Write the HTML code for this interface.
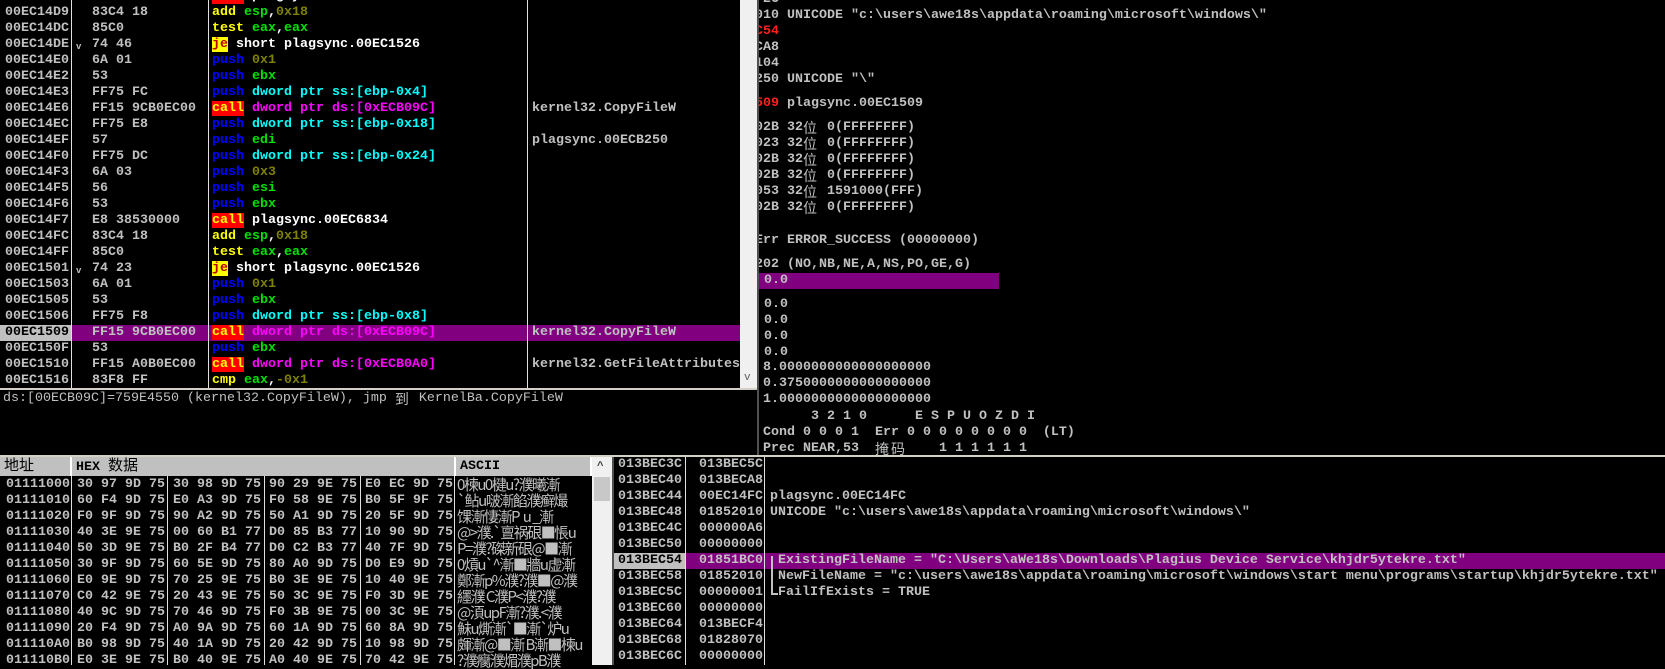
<!DOCTYPE html>
<html><head><meta charset="utf-8"><style>
*{margin:0;padding:0;box-sizing:border-box}
body{width:1665px;height:665px;background:#000;overflow:hidden;position:relative;font-family:"Liberation Mono","Noto Sans CJK SC",monospace;font-size:13.33px;font-weight:bold;color:#c0c0c0}
.a{position:absolute;white-space:pre;line-height:16px;height:16px}
.vl{position:absolute;background:#e0e0e0;width:1px}
.y{color:#ffff00}.g{color:#00e000}.o{color:#808000}.b{color:#0000ff}.c{color:#00ffff}.m{color:#ff00ff}.w{color:#fff}.r{color:#ff2020}
.call{background:#ff0000;color:#ffff00}
.je{background:#ffff00;color:#c00000}
.cj{display:inline-block;width:16px;font-family:"Noto Sans CJK SC",sans-serif;font-weight:normal;font-size:14px;line-height:16px;vertical-align:top}
.hdr{position:absolute;top:457px;height:19px;background:#c0c0c0;color:#000;border-right:2px solid #fff;line-height:19px;padding-left:4px;font-family:"Liberation Mono","Noto Sans CJK SC",monospace}
.asc{font-family:"Noto Sans CJK SC",sans-serif;font-weight:normal;font-size:15px;letter-spacing:-1.5px;overflow:hidden;width:134px}
</style></head><body>

<!-- disassembly -->
<div style="position:absolute;left:0;top:0;width:740px;height:388px;overflow:hidden">
<div class="a" style="top:325px;left:0;width:740px;background:#800080"></div>
<div class="a" style="top:325px;left:0;width:71px;background:#c0c0c0"></div>
<div class="vl" style="left:71px;top:0;height:388px"></div>
<div class="vl" style="left:208px;top:0;height:388px"></div>
<div class="vl" style="left:527px;top:0;height:388px"></div>

<div class="a" style="top:-11px;left:5px">00EC14D4</div><div class="a" style="top:-11px;left:92px">E8 56530000</div><div class="a" style="top:-11px;left:212px"><span class="call">call</span> <span class="w">plagsync.00EC6834</span></div>
<div class="a" style="top:5px;left:5px">00EC14D9</div><div class="a" style="top:5px;left:92px">83C4 18</div><div class="a" style="top:5px;left:212px"><span class="y">add</span> <span class="g">esp</span><span class="w">,</span><span class="o">0x18</span></div>
<div class="a" style="top:21px;left:5px">00EC14DC</div><div class="a" style="top:21px;left:92px">85C0</div><div class="a" style="top:21px;left:212px"><span class="y">test</span> <span class="g">eax</span><span class="w">,</span><span class="g">eax</span></div>
<div class="a" style="top:37px;left:5px">00EC14DE</div><div class="a" style="top:39px;left:76px;font-size:9px">v</div><div class="a" style="top:37px;left:92px">74 46</div><div class="a" style="top:37px;left:212px"><span class="je">je</span> <span class="w">short plagsync.00EC1526</span></div>
<div class="a" style="top:53px;left:5px">00EC14E0</div><div class="a" style="top:53px;left:92px">6A 01</div><div class="a" style="top:53px;left:212px"><span class="b">push</span> <span class="o">0x1</span></div>
<div class="a" style="top:69px;left:5px">00EC14E2</div><div class="a" style="top:69px;left:92px">53</div><div class="a" style="top:69px;left:212px"><span class="b">push</span> <span class="g">ebx</span></div>
<div class="a" style="top:85px;left:5px">00EC14E3</div><div class="a" style="top:85px;left:92px">FF75 FC</div><div class="a" style="top:85px;left:212px"><span class="b">push</span> <span class="c">dword ptr ss:[ebp-0x4]</span></div>
<div class="a" style="top:101px;left:5px">00EC14E6</div><div class="a" style="top:101px;left:92px">FF15 9CB0EC00</div><div class="a" style="top:101px;left:212px"><span class="call">call</span> <span class="m">dword ptr ds:[0xECB09C]</span></div><div class="a" style="top:101px;left:532px">kernel32.CopyFileW</div>
<div class="a" style="top:117px;left:5px">00EC14EC</div><div class="a" style="top:117px;left:92px">FF75 E8</div><div class="a" style="top:117px;left:212px"><span class="b">push</span> <span class="c">dword ptr ss:[ebp-0x18]</span></div>
<div class="a" style="top:133px;left:5px">00EC14EF</div><div class="a" style="top:133px;left:92px">57</div><div class="a" style="top:133px;left:212px"><span class="b">push</span> <span class="g">edi</span></div><div class="a" style="top:133px;left:532px">plagsync.00ECB250</div>
<div class="a" style="top:149px;left:5px">00EC14F0</div><div class="a" style="top:149px;left:92px">FF75 DC</div><div class="a" style="top:149px;left:212px"><span class="b">push</span> <span class="c">dword ptr ss:[ebp-0x24]</span></div>
<div class="a" style="top:165px;left:5px">00EC14F3</div><div class="a" style="top:165px;left:92px">6A 03</div><div class="a" style="top:165px;left:212px"><span class="b">push</span> <span class="o">0x3</span></div>
<div class="a" style="top:181px;left:5px">00EC14F5</div><div class="a" style="top:181px;left:92px">56</div><div class="a" style="top:181px;left:212px"><span class="b">push</span> <span class="g">esi</span></div>
<div class="a" style="top:197px;left:5px">00EC14F6</div><div class="a" style="top:197px;left:92px">53</div><div class="a" style="top:197px;left:212px"><span class="b">push</span> <span class="g">ebx</span></div>
<div class="a" style="top:213px;left:5px">00EC14F7</div><div class="a" style="top:213px;left:92px">E8 38530000</div><div class="a" style="top:213px;left:212px"><span class="call">call</span> <span class="w">plagsync.00EC6834</span></div>
<div class="a" style="top:229px;left:5px">00EC14FC</div><div class="a" style="top:229px;left:92px">83C4 18</div><div class="a" style="top:229px;left:212px"><span class="y">add</span> <span class="g">esp</span><span class="w">,</span><span class="o">0x18</span></div>
<div class="a" style="top:245px;left:5px">00EC14FF</div><div class="a" style="top:245px;left:92px">85C0</div><div class="a" style="top:245px;left:212px"><span class="y">test</span> <span class="g">eax</span><span class="w">,</span><span class="g">eax</span></div>
<div class="a" style="top:261px;left:5px">00EC1501</div><div class="a" style="top:263px;left:76px;font-size:9px">v</div><div class="a" style="top:261px;left:92px">74 23</div><div class="a" style="top:261px;left:212px"><span class="je">je</span> <span class="w">short plagsync.00EC1526</span></div>
<div class="a" style="top:277px;left:5px">00EC1503</div><div class="a" style="top:277px;left:92px">6A 01</div><div class="a" style="top:277px;left:212px"><span class="b">push</span> <span class="o">0x1</span></div>
<div class="a" style="top:293px;left:5px">00EC1505</div><div class="a" style="top:293px;left:92px">53</div><div class="a" style="top:293px;left:212px"><span class="b">push</span> <span class="g">ebx</span></div>
<div class="a" style="top:309px;left:5px">00EC1506</div><div class="a" style="top:309px;left:92px">FF75 F8</div><div class="a" style="top:309px;left:212px"><span class="b">push</span> <span class="c">dword ptr ss:[ebp-0x8]</span></div>
<div class="a" style="top:325px;left:5px;color:#000">00EC1509</div><div class="a" style="top:325px;left:92px">FF15 9CB0EC00</div><div class="a" style="top:325px;left:212px"><span class="call">call</span> <span class="m">dword ptr ds:[0xECB09C]</span></div><div class="a" style="top:325px;left:532px">kernel32.CopyFileW</div>
<div class="a" style="top:341px;left:5px">00EC150F</div><div class="a" style="top:341px;left:92px">53</div><div class="a" style="top:341px;left:212px"><span class="b">push</span> <span class="g">ebx</span></div>
<div class="a" style="top:357px;left:5px">00EC1510</div><div class="a" style="top:357px;left:92px">FF15 A0B0EC00</div><div class="a" style="top:357px;left:212px"><span class="call">call</span> <span class="m">dword ptr ds:[0xECB0A0]</span></div><div class="a" style="top:357px;left:532px">kernel32.GetFileAttributesW</div>
<div class="a" style="top:373px;left:5px">00EC1516</div><div class="a" style="top:373px;left:92px">83F8 FF</div><div class="a" style="top:373px;left:212px"><span class="y">cmp</span> <span class="g">eax</span><span class="w">,</span><span class="o">-0x1</span></div>
</div>
<!-- disasm scrollbar -->
<div style="position:absolute;left:740px;top:0;width:17px;height:388px;background:#f0f0f0"></div>
<div class="a" style="left:744px;top:370px;color:#606060;font-weight:normal;font-size:11px">v</div>
<div style="position:absolute;left:757px;top:0;width:2px;height:457px;background:#505050"></div>

<!-- info pane -->
<div style="position:absolute;left:0;top:388px;width:757px;height:2px;background:#d4d0c8"></div>
<div class="a" style="left:3px;top:391px;font-weight:normal">ds:[00ECB09C]=759E4550 (kernel32.CopyFileW), jmp <span class="cj">到</span> KernelBa.CopyFileW</div>

<!-- registers -->
<div style="position:absolute;left:759px;top:0;width:906px;height:455px;overflow:hidden">
<div class="a" style="left:0;top:273px;width:240px;background:#800080"></div>
<div class="a" style="left:-4px;top:-8px">F2C</div>
<div class="a" style="left:-4px;top:8px">010 UNICODE "c:\users\awe18s\appdata\roaming\microsoft\windows\"</div>
<div class="a r" style="left:-4px;top:24px">C54</div>
<div class="a" style="left:-4px;top:40px">CA8</div>
<div class="a" style="left:-4px;top:56px">104</div>
<div class="a" style="left:-4px;top:72px">250 UNICODE "\"</div>
<div class="a" style="left:-4px;top:96px"><span class="r">509</span> plagsync.00EC1509</div>
<div class="a" style="left:-4px;top:120px">02B 32<span class="cj">位</span> 0(FFFFFFFF)</div>
<div class="a" style="left:-4px;top:136px">023 32<span class="cj">位</span> 0(FFFFFFFF)</div>
<div class="a" style="left:-4px;top:152px">02B 32<span class="cj">位</span> 0(FFFFFFFF)</div>
<div class="a" style="left:-4px;top:168px">02B 32<span class="cj">位</span> 0(FFFFFFFF)</div>
<div class="a" style="left:-4px;top:184px">053 32<span class="cj">位</span> 1591000(FFF)</div>
<div class="a" style="left:-4px;top:200px">02B 32<span class="cj">位</span> 0(FFFFFFFF)</div>
<div class="a" style="left:-4px;top:233px">Err ERROR_SUCCESS (00000000)</div>
<div class="a" style="left:-4px;top:257px">202 (NO,NB,NE,A,NS,PO,GE,G)</div>
<div class="a" style="left:5px;top:273px">0.0</div>
<div class="a" style="left:5px;top:297px">0.0</div>
<div class="a" style="left:5px;top:313px">0.0</div>
<div class="a" style="left:5px;top:329px">0.0</div>
<div class="a" style="left:5px;top:345px">0.0</div>
<div class="a" style="left:4px;top:360px">8.0000000000000000000</div>
<div class="a" style="left:4px;top:376px">0.3750000000000000000</div>
<div class="a" style="left:4px;top:392px">1.0000000000000000000</div>
<div class="a" style="left:4px;top:409px">      3 2 1 0      E S P U O Z D I</div>
<div class="a" style="left:4px;top:425px">Cond 0 0 0 1  Err 0 0 0 0 0 0 0 0  (LT)</div>
<div class="a" style="left:4px;top:441px">Prec NEAR,53  <span class="cj">掩</span><span class="cj">码</span>    1 1 1 1 1 1</div>
</div>

<div style="position:absolute;left:0;top:455px;width:1665px;height:2px;background:#d4d0c8"></div>

<!-- hex dump -->
<div class="hdr" style="left:0;width:72px;font-weight:normal;font-size:15px">地址</div>
<div class="hdr" style="left:72px;width:384px">HEX <span style="font-weight:normal;font-size:15px">数据</span></div>
<div class="hdr" style="left:456px;width:136px">ASCII</div>
<div class="vl" style="left:71px;top:476px;height:189px"></div>
<div class="vl" style="left:167px;top:476px;height:189px"></div>
<div class="vl" style="left:264px;top:476px;height:189px"></div>
<div class="vl" style="left:360px;top:476px;height:189px"></div>
<div class="vl" style="left:454px;top:476px;height:189px"></div>
<div style="position:absolute;left:592px;top:457px;width:20px;height:208px;background:#f0f0f0"></div>
<div style="position:absolute;left:594px;top:477px;width:16px;height:24px;background:#c8c8c8"></div>
<div class="a" style="left:597px;top:459px;color:#404040;font-size:11px">^</div>
<div style="position:absolute;left:612px;top:457px;width:2px;height:208px;background:#505050"></div>

<div class="a" style="left:6px;top:477px">01111000</div><div class="a" style="left:77px;top:477px">30 97 9D 75</div><div class="a" style="left:173px;top:477px">30 98 9D 75</div><div class="a" style="left:269px;top:477px">90 29 9E 75</div><div class="a" style="left:365px;top:477px">E0 EC 9D 75</div><div class="a asc" style="left:457px;top:477px">0楝u0楗u?濮曦漸</div>
<div class="a" style="left:6px;top:493px">01111010</div><div class="a" style="left:77px;top:493px">60 F4 9D 75</div><div class="a" style="left:173px;top:493px">E0 A3 9D 75</div><div class="a" style="left:269px;top:493px">F0 58 9E 75</div><div class="a" style="left:365px;top:493px">B0 5F 9F 75</div><div class="a asc" style="left:457px;top:493px">`鲇u啵漸餡濮癣熶</div>
<div class="a" style="left:6px;top:509px">01111020</div><div class="a" style="left:77px;top:509px">F0 9F 9D 75</div><div class="a" style="left:173px;top:509px">90 A2 9D 75</div><div class="a" style="left:269px;top:509px">50 A1 9D 75</div><div class="a" style="left:365px;top:509px">20 5F 9D 75</div><div class="a asc" style="left:457px;top:509px">馃漸悽漸P  u _漸</div>
<div class="a" style="left:6px;top:525px">01111030</div><div class="a" style="left:77px;top:525px">40 3E 9E 75</div><div class="a" style="left:173px;top:525px">00 60 B1 77</div><div class="a" style="left:269px;top:525px">D0 85 B3 77</div><div class="a" style="left:365px;top:525px">10 90 9D 75</div><div class="a asc" style="left:457px;top:525px">@&gt;濮.`亶祸硍■悵u</div>
<div class="a" style="left:6px;top:541px">01111040</div><div class="a" style="left:77px;top:541px">50 3D 9E 75</div><div class="a" style="left:173px;top:541px">B0 2F B4 77</div><div class="a" style="left:269px;top:541px">D0 C2 B3 77</div><div class="a" style="left:365px;top:541px">40 7F 9D 75</div><div class="a asc" style="left:457px;top:541px">P=濮?磔新硍@■漸</div>
<div class="a" style="left:6px;top:557px">01111050</div><div class="a" style="left:77px;top:557px">30 9F 9D 75</div><div class="a" style="left:173px;top:557px">60 5E 9D 75</div><div class="a" style="left:269px;top:557px">80 A0 9D 75</div><div class="a" style="left:365px;top:557px">D0 E9 9D 75</div><div class="a asc" style="left:457px;top:557px">0熕u`^漸■牆u虚漸</div>
<div class="a" style="left:6px;top:573px">01111060</div><div class="a" style="left:77px;top:573px">E0 9E 9D 75</div><div class="a" style="left:173px;top:573px">70 25 9E 75</div><div class="a" style="left:269px;top:573px">B0 3E 9E 75</div><div class="a" style="left:365px;top:573px">10 40 9E 75</div><div class="a asc" style="left:457px;top:573px">鄭漸p%濮?濮■@濮</div>
<div class="a" style="left:6px;top:589px">01111070</div><div class="a" style="left:77px;top:589px">C0 42 9E 75</div><div class="a" style="left:173px;top:589px">20 43 9E 75</div><div class="a" style="left:269px;top:589px">50 3C 9E 75</div><div class="a" style="left:365px;top:589px">F0 3D 9E 75</div><div class="a asc" style="left:457px;top:589px">纆濮 C濮P&lt;濮?濮</div>
<div class="a" style="left:6px;top:605px">01111080</div><div class="a" style="left:77px;top:605px">40 9C 9D 75</div><div class="a" style="left:173px;top:605px">70 46 9D 75</div><div class="a" style="left:269px;top:605px">F0 3B 9E 75</div><div class="a" style="left:365px;top:605px">00 3C 9E 75</div><div class="a asc" style="left:457px;top:605px">@湏upF漸?濮.&lt;濮</div>
<div class="a" style="left:6px;top:621px">01111090</div><div class="a" style="left:77px;top:621px">20 F4 9D 75</div><div class="a" style="left:173px;top:621px">A0 9A 9D 75</div><div class="a" style="left:269px;top:621px">60 1A 9D 75</div><div class="a" style="left:365px;top:621px">60 8A 9D 75</div><div class="a asc" style="left:457px;top:621px">鮇u燍漸`■漸`炉u</div>
<div class="a" style="left:6px;top:637px">011110A0</div><div class="a" style="left:77px;top:637px">B0 98 9D 75</div><div class="a" style="left:173px;top:637px">40 1A 9D 75</div><div class="a" style="left:269px;top:637px">20 42 9D 75</div><div class="a" style="left:365px;top:637px">10 98 9D 75</div><div class="a asc" style="left:457px;top:637px">皹漸@■漸 B漸■楝u</div>
<div class="a" style="left:6px;top:653px">011110B0</div><div class="a" style="left:77px;top:653px">E0 3E 9E 75</div><div class="a" style="left:173px;top:653px">B0 40 9E 75</div><div class="a" style="left:269px;top:653px">A0 40 9E 75</div><div class="a" style="left:365px;top:653px">70 42 9E 75</div><div class="a asc" style="left:457px;top:653px">?濮癵濮煝濮pB濮</div>

<!-- stack -->
<div class="a" style="left:614px;top:553px;width:72px;background:#c0c0c0"></div>
<div class="a" style="left:686px;top:553px;width:979px;background:#800080"></div>
<div class="vl" style="left:685px;top:457px;height:208px"></div>
<div class="vl" style="left:764px;top:457px;height:208px"></div>
<div class="a" style="left:618px;top:457px">013BEC3C</div><div class="a" style="left:699px;top:457px">013BEC5C</div>
<div class="a" style="left:618px;top:473px">013BEC40</div><div class="a" style="left:699px;top:473px">013BECA8</div>
<div class="a" style="left:618px;top:489px">013BEC44</div><div class="a" style="left:699px;top:489px">00EC14FC</div><div class="a" style="left:770px;top:489px">plagsync.00EC14FC</div>
<div class="a" style="left:618px;top:505px">013BEC48</div><div class="a" style="left:699px;top:505px">01852010</div><div class="a" style="left:770px;top:505px">UNICODE "c:\users\awe18s\appdata\roaming\microsoft\windows\"</div>
<div class="a" style="left:618px;top:521px">013BEC4C</div><div class="a" style="left:699px;top:521px">000000A6</div>
<div class="a" style="left:618px;top:537px">013BEC50</div><div class="a" style="left:699px;top:537px">00000000</div>
<div class="a" style="left:618px;top:553px;color:#000">013BEC54</div><div class="a" style="left:699px;top:553px">01851BC0</div><div class="a" style="left:778px;top:553px">ExistingFileName = "C:\Users\aWe18s\Downloads\Plagius Device Service\khjdr5ytekre.txt"</div>
<div class="a" style="left:618px;top:569px">013BEC58</div><div class="a" style="left:699px;top:569px">01852010</div><div class="a" style="left:778px;top:569px">NewFileName = "c:\users\awe18s\appdata\roaming\microsoft\windows\start menu\programs\startup\khjdr5ytekre.txt"</div>
<div class="a" style="left:618px;top:585px">013BEC5C</div><div class="a" style="left:699px;top:585px">00000001</div><div class="a" style="left:778px;top:585px">FailIfExists = TRUE</div>
<div style="position:absolute;left:771px;top:556px;width:2px;height:38px;background:#c0c0c0"></div>
<div style="position:absolute;left:771px;top:593px;width:7px;height:2px;background:#c0c0c0"></div>
<div class="a" style="left:618px;top:601px">013BEC60</div><div class="a" style="left:699px;top:601px">00000000</div>
<div class="a" style="left:618px;top:617px">013BEC64</div><div class="a" style="left:699px;top:617px">013BECF4</div>
<div class="a" style="left:618px;top:633px">013BEC68</div><div class="a" style="left:699px;top:633px">01828070</div>
<div class="a" style="left:618px;top:649px">013BEC6C</div><div class="a" style="left:699px;top:649px">00000000</div>
</body></html>
